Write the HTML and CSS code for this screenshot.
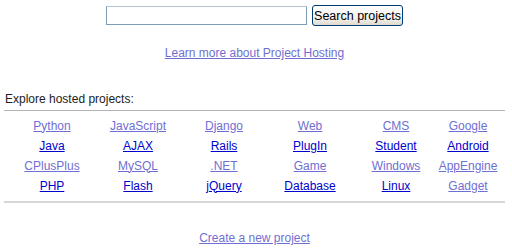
FILE: index.html
```html
<!DOCTYPE html>
<html lang="en">
<head>
    <meta charset="UTF-8">
    <title>Project Hosting</title>
    <link rel="stylesheet" href="styles.css">
</head>
<body>
    <div class="search">
        <input type="text" class="search-box">
        <button class="search-btn">Search projects</button>
    </div>

    <p class="learn"><a href="#" class="seen">Learn more about Project Hosting</a></p>

    <div class="explore">Explore hosted projects:</div>
    <div class="labels">
        <a href="#" class="seen">Python</a>
        <a href="#" class="seen">JavaScript</a>
        <a href="#" class="seen">Django</a>
        <a href="#" class="seen">Web</a>
        <a href="#" class="seen">CMS</a>
        <a href="#" class="seen">Google</a>

        <a href="#">Java</a>
        <a href="#">AJAX</a>
        <a href="#">Rails</a>
        <a href="#">PlugIn</a>
        <a href="#">Student</a>
        <a href="#">Android</a>

        <a href="#" class="seen">CPlusPlus</a>
        <a href="#" class="seen">MySQL</a>
        <a href="#" class="seen">.NET</a>
        <a href="#" class="seen">Game</a>
        <a href="#" class="seen">Windows</a>
        <a href="#" class="seen">AppEngine</a>

        <a href="#">PHP</a>
        <a href="#">Flash</a>
        <a href="#">jQuery</a>
        <a href="#">Database</a>
        <a href="#">Linux</a>
        <a href="#" class="seen">Gadget</a>
    </div>

    <p class="create"><a href="#" class="seen">Create a new project</a></p>
</body>
</html>
```

FILE: styles.css
```css
body {
    margin: 0;
    padding: 0 7px 0 4px;
    font-family: "Liberation Sans", Arial, sans-serif;
    font-size: 12px;
    line-height: 15px;
    color: #000;
    background: #fff;
}
a {
    color: #0000cc;
}
a.seen {
    color: #6f6fd2;
}
.search {
    display: flex;
    justify-content: center;
    align-items: center;
    gap: 5px;
    padding-top: 5px;
}
.search-box {
    width: 195px;
    height: 17px;
    margin: 0;
    padding: 0 2px;
    border: 1px solid #7f9db9;
    border-top-color: #b6c4d6;
    font: inherit;
}
.search-btn {
    height: 21px;
    margin: 0;
    padding: 0 1px;
    border: 1px solid #003c74;
    border-radius: 3px;
    background: linear-gradient(#ffffff, #f4f3ee 60%, #dedbcf);
    font-family: inherit;
    font-size: 12.5px;
    color: #000;
}
.learn {
    margin: 20px 0 0;
    text-align: center;
}
.explore {
    margin-top: 31px;
    padding-left: 1px;
    padding-bottom: 3px;
    border-bottom: 1px solid #b4b4b4;
    color: #222;
}
.labels {
    display: grid;
    grid-template-columns: repeat(5, 86px) 58px;
    grid-auto-rows: 20px;
    align-items: center;
    justify-items: center;
    padding: 5px 0 5px 5px;
    border-bottom: 2px solid #d6d6d6;
}
.create {
    margin: 28px 0 0;
    text-align: center;
}
```
